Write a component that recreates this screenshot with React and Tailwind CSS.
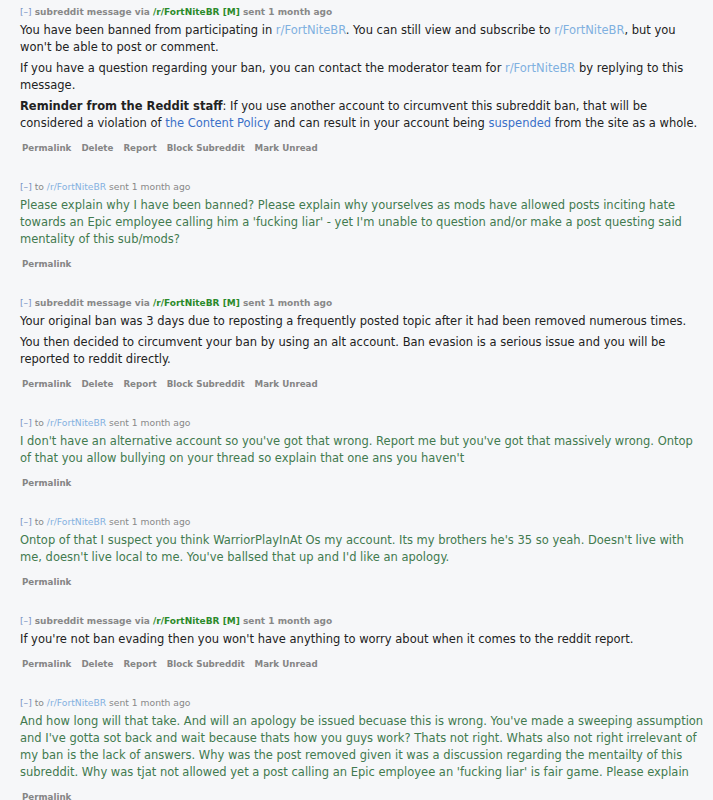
import React from "react";

const FONT = { fontFamily: '"DejaVu Sans", Verdana, sans-serif' };

function Header({ mod }) {
  if (mod) {
    return (
      <div className="text-[9px] leading-[14px] text-[#888] font-bold whitespace-nowrap">
        <span className="text-[#7691c4] font-normal">[–]</span>{" "}
        subreddit message via{" "}
        <span className="text-[#2b8a2b]">/r/FortNiteBR</span>{" "}
        <span className="text-[#2b8a2b]">[M]</span> sent 1 month ago
      </div>
    );
  }
  return (
    <div className="text-[9.2px] leading-[14px] text-[#888] whitespace-nowrap">
      <span className="text-[#7691c4]">[–]</span> to{" "}
      <span className="text-[#85b1e0]">/r/FortNiteBR</span> sent 1 month ago
    </div>
  );
}

function Buttons({ full }) {
  const items = full
    ? ["Permalink", "Delete", "Report", "Block Subreddit", "Mark Unread"]
    : ["Permalink"];
  return (
    <div className="mt-[9px] flex gap-[10px] pl-[2px] text-[8.7px] leading-[14px] font-bold text-[#858585]">
      {items.map((t) => (
        <span key={t}>{t}</span>
      ))}
    </div>
  );
}

function Message({ mod, children }) {
  return (
    <div className="pl-[20px] pr-[6px] pb-[25px]">
      <Header mod={mod} />
      <div
        className={`mt-[3px] flex flex-col gap-[4px] text-[11.5px] leading-[17px] ${
          mod ? "text-[#222]" : "text-[#427a4f]"
        }`}
      >
        {children}
      </div>
      <Buttons full={mod} />
    </div>
  );
}

const Sub = () => <span className="text-[#7fb0e0]">r/FortNiteBR</span>;

export default function App() {
  return (
    <div className="min-h-[800px] bg-[#f6f7f9] pt-[5px] overflow-hidden" style={FONT}>
      <Message mod>
        <p>
          You have been banned from participating in <Sub />. You can still view and subscribe to <Sub />, but you won't be able to post or comment.
        </p>
        <p>
          If you have a question regarding your ban, you can contact the moderator team for <Sub /> by replying to this message.
        </p>
        <p>
          <b>Reminder from the Reddit staff</b>: If you use another account to circumvent this subreddit ban, that will be considered a violation of{" "}
          <span className="text-[#3a70c8]">the Content Policy</span> and can result in your account being{" "}
          <span className="text-[#3a70c8]">suspended</span> from the site as a whole.
        </p>
      </Message>
      <Message>
        <p>
          Please explain why I have been banned? Please explain why yourselves as mods have allowed posts inciting hate towards an Epic employee calling him a 'fucking liar' - yet I'm unable to question and/or make a post questing said mentality of this sub/mods?
        </p>
      </Message>
      <Message mod>
        <p>
          Your original ban was 3 days due to reposting a frequently posted topic after it had been removed numerous times.
        </p>
        <p>
          You then decided to circumvent your ban by using an alt account. Ban evasion is a serious issue and you will be reported to reddit directly.
        </p>
      </Message>
      <Message>
        <p>
          I don't have an alternative account so you've got that wrong. Report me but you've got that massively wrong. Ontop of that you allow bullying on your thread so explain that one ans you haven't
        </p>
      </Message>
      <Message>
        <p>
          Ontop of that I suspect you think WarriorPlayInAt Os my account. Its my brothers he's 35 so yeah. Doesn't live with me, doesn't live local to me. You've ballsed that up and I'd like an apology.
        </p>
      </Message>
      <Message mod>
        <p>
          If you're not ban evading then you won't have anything to worry about when it comes to the reddit report.
        </p>
      </Message>
      <Message>
        <p>
          And how long will that take. And will an apology be issued becuase this is wrong. You've made a sweeping assumption and I've gotta sot back and wait because thats how you guys work? Thats not right. Whats also not right irrelevant of my ban is the lack of answers. Why was the post removed given it was a discussion regarding the mentailty of this subreddit. Why was tjat not allowed yet a post calling an Epic employee an 'fucking liar' is fair game. Please explain
        </p>
      </Message>
    </div>
  );
}
